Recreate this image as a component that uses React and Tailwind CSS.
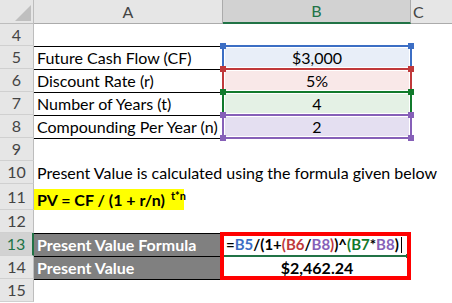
import React from 'react';

const RANGES = {
  blue: { line: 'border-[#3c6ec4]', dot: 'bg-[#3c6ec4]', fill: 'bg-[#e8eef8]' },
  red: { line: 'border-[#c0393b]', dot: 'bg-[#c0393b]', fill: 'bg-[#f9e8e8]' },
  green: { line: 'border-[#117a2c]', dot: 'bg-[#117a2c]', fill: 'bg-[#e4f1e5]' },
  purple: { line: 'border-[#8660b8]', dot: 'bg-[#8660b8]', fill: 'bg-[#e4dff1]' },
};

function RowHead({ n, active }) {
  return (
    <div
      className={
        'w-[34px] shrink-0 flex items-center justify-center border-b border-[#d0d0d0] ' +
        (active
          ? 'bg-[#d2d2d2] text-[#217346] border-r-2 border-r-[#217346]'
          : 'bg-[#e6e6e6] text-[#444] border-r border-r-[#bdbdbd]')
      }
    >
      {n}
    </div>
  );
}

// colored reference box drawn over a B cell
function RefBox({ color }) {
  const c = RANGES[color];
  return (
    <>
      <div className={'absolute inset-[2px] ' + c.fill} />
      <div className={'absolute -top-[1px] -left-[1px] -right-[1px] -bottom-[1px] border-2 ' + c.line}>
        <div className={'absolute -top-[4px] -left-[4px] w-[6px] h-[6px] ' + c.dot} />
        <div className={'absolute -top-[4px] -right-[4px] w-[6px] h-[6px] ' + c.dot} />
        <div className={'absolute -bottom-[4px] -left-[4px] w-[6px] h-[6px] ' + c.dot} />
        <div className={'absolute -bottom-[4px] -right-[4px] w-[6px] h-[6px] ' + c.dot} />
      </div>
    </>
  );
}

function DataRow({ n, label, value, color }) {
  return (
    <div className="flex h-[23px]">
      <RowHead n={n} />
      <div className="w-[189px] shrink-0 border-t border-black pl-[3px] flex items-center whitespace-nowrap">
        {label}
      </div>
      <div className="w-[188px] shrink-0 relative flex items-center justify-center">
        <RefBox color={color} />
        <span className="relative">{value}</span>
      </div>
      <div className="flex-1" />
    </div>
  );
}

function Blank({ n, h = 'h-[23px]', top }) {
  return (
    <div className={'flex ' + h}>
      <RowHead n={n} />
      <div className={'w-[189px] shrink-0 ' + (top ? 'border-t border-black' : '')} />
      <div className="flex-1" />
    </div>
  );
}

export default function App() {
  return (
    <div className="w-[452px] h-[303px] overflow-hidden bg-white text-black text-[16px] leading-none [font-family:Lato,sans-serif]">
      {/* column headers */}
      <div className="flex h-[24px]">
        <div className="w-[34px] shrink-0 relative bg-[#e6e6e6] border-r border-b border-[#bdbdbd]">
          <svg className="absolute left-0 top-0" width="33" height="23" viewBox="0 0 33 23">
            <polygon points="31,5 31,21 15,21" fill="#bfbfbf" />
          </svg>
        </div>
        <div className="w-[189px] shrink-0 bg-[#e6e6e6] text-[#444] border-r border-b border-[#ababab] flex items-center justify-center">
          A
        </div>
        <div className="w-[188px] shrink-0 bg-[#d2d2d2] text-[#217346] border-r border-r-[#ababab] border-b-2 border-b-[#217346] flex items-center justify-center">
          B
        </div>
        <div className="flex-1 bg-[#e6e6e6] text-[#444] border-b border-[#ababab] flex items-center pl-[2px]">
          C
        </div>
      </div>

      <Blank n={4} h="h-[22px]" />
      <DataRow n={5} label="Future Cash Flow (CF)" value="$3,000" color="blue" />
      <DataRow n={6} label="Discount Rate (r)" value="5%" color="red" />
      <DataRow n={7} label="Number of Years (t)" value="4" color="green" />
      <DataRow n={8} label="Compounding Per Year (n)" value="2" color="purple" />
      <Blank n={9} top />

      <div className="flex h-[23px]">
        <RowHead n={10} />
        <div className="w-[189px] shrink-0 pl-[3px] flex items-center whitespace-nowrap">
          Present Value is calculated using the formula given below
        </div>
        <div className="flex-1" />
      </div>

      <div className="flex h-[26px]">
        <RowHead n={11} />
        <div className="w-[189px] shrink-0 flex items-end">
          <div className="w-[150px] h-[21px] bg-[#ffff00] pl-[3px] flex items-center font-bold whitespace-nowrap">
            PV = CF / (1 + r/n)
            <span className="ml-[6px] text-[11px] font-bold self-start mt-[1px]">t*n</span>
          </div>
        </div>
        <div className="flex-1" />
      </div>

      <Blank n={12} />

      <div className="flex h-[23px]">
        <RowHead n={13} active />
        <div className="w-[189px] shrink-0 border-t border-black bg-[#808080] text-white font-bold pl-[3px] flex items-center whitespace-nowrap">
          Present Value Formula
        </div>
        <div className="w-[188px] shrink-0 relative flex items-center pl-[3px] text-[15px] font-bold whitespace-nowrap">
          <span>
            =<span className="text-[#3c6ec4]">B5</span>/(1+
            <span className="text-[#c0393b]">(B6</span>/
            <span className="text-[#8660b8]">B8</span>
            <span className="text-[#c0393b]">)</span>)^
            <span className="text-[#117a2c]">(B7</span>*
            <span className="text-[#8660b8]">B8</span>)
          </span>
          <span className="inline-block w-[1px] h-[16px] bg-black ml-[2px]" />
          <div className="absolute left-[1px] right-[3px] -bottom-[1px] h-[2px] bg-[#217346]" />
          <div className="absolute right-[1px] -bottom-[2px] w-[4px] h-[4px] bg-[#217346]" />
          <div className="absolute -left-[3px] -top-[1px] w-[191px] h-[48px] border-4 border-[#ff0000]" />
        </div>
        <div className="flex-1" />
      </div>

      <div className="flex h-[23px]">
        <RowHead n={14} />
        <div className="w-[189px] shrink-0 border-t border-black bg-[#808080] text-white font-bold pl-[3px] flex items-center whitespace-nowrap">
          Present Value
        </div>
        <div className="w-[188px] shrink-0 flex items-center justify-center font-bold">$2,462.24</div>
        <div className="flex-1" />
      </div>

      <Blank n={15} top />
    </div>
  );
}
